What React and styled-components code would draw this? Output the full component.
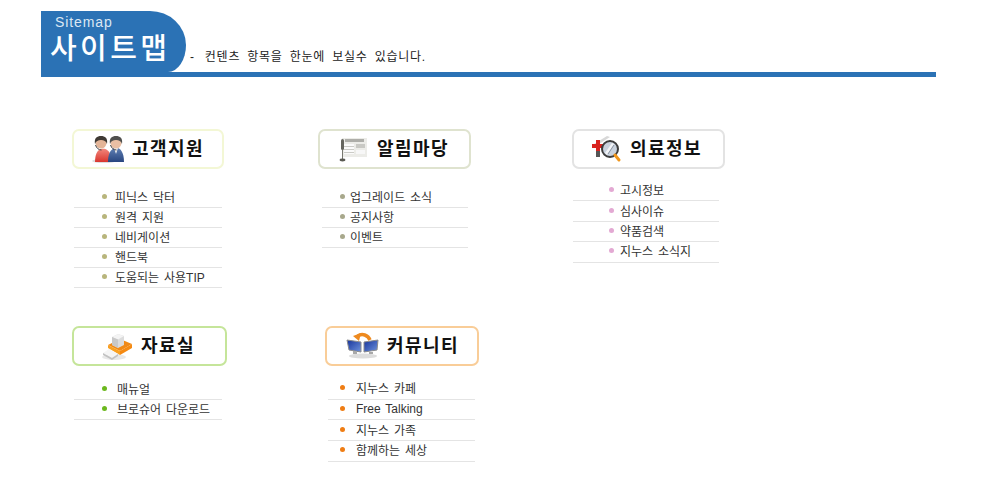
import React from 'react';
import styled, { createGlobalStyle } from 'styled-components';

const GlobalStyle = createGlobalStyle`
  body {
    margin: 0;
    background: #fff;
    font-family: "Liberation Sans", "Noto Sans CJK KR", sans-serif;
  }
`;

const Page = styled.div`
  padding-top: 11px;
`;

const Header = styled.header`
  margin-left: 41px;
  width: 895px;
  border-bottom: 5px solid #2b72b5;
`;

const HeaderTop = styled.div`
  display: flex;
  align-items: flex-end;
`;

const TitleTab = styled.div`
  width: 145px;
  height: 61px;
  box-sizing: border-box;
  padding: 4px 0 0 9px;
  background: #2b72b5;
  border-radius: 0 36px 18px 0 / 0 34px 27px 0;
  color: #fff;
`;

const TabSmall = styled.div`
  margin-left: 5px;
  font-size: 14px;
  line-height: 15px;
  letter-spacing: 0.9px;
  color: #dbe7f3;
`;

const TabBig = styled.div`
  margin-top: 1px;
  font-size: 29px;
  font-weight: 500;
  line-height: 36px;
  letter-spacing: 3.4px;
  white-space: nowrap;
`;

const Subtitle = styled.div`
  margin: 0 0 7px 4px;
  font-size: 12px;
  line-height: 16px;
  color: #222;
  word-spacing: 3px;
  letter-spacing: 0.75px;
  white-space: nowrap;
`;

const Dash = styled.span`
  margin-right: 3px;
`;

const Row = styled.div`
  display: flex;
  margin: ${(p) => p.$top}px 0 0 72px;
`;

const Section = styled.section`
  width: ${(p) => p.$width}px;
  flex: none;
`;

const Card = styled.div`
  display: flex;
  align-items: center;
  width: ${(p) => p.$width}px;
  height: 40px;
  box-sizing: border-box;
  padding-left: ${(p) => p.$pad}px;
  gap: ${(p) => p.$gap}px;
  border: 2px solid ${(p) => p.$color};
  border-radius: 7px;
  background: #fff;
`;

const CardIcon = styled.svg`
  display: block;
  flex: none;
  width: 36px;
  height: 32px;
  margin-left: -2px;
`;

const CardTitle = styled.h2`
  margin: 0;
  font-size: 18px;
  font-weight: 700;
  line-height: 24px;
  letter-spacing: 1.4px;
  color: #111;
  white-space: nowrap;
`;

const List = styled.ul`
  list-style: none;
  width: ${(p) => p.$width}px;
  margin: ${(p) => p.$top}px 0 0 ${(p) => p.$left}px;
  padding: 0;
`;

const Item = styled.li`
  display: flex;
  align-items: center;
  height: ${(p) => p.$height}px;
  box-sizing: border-box;
  padding-left: ${(p) => p.$pad}px;
  padding-bottom: 2px;
  border-bottom: 1px solid #e4e4e4;
  font-size: 12px;
  color: #333;
  word-spacing: 1.5px;
  white-space: nowrap;
`;

const Bullet = styled.span`
  flex: none;
  width: 5px;
  height: 5px;
  margin-right: ${(p) => p.$gap}px;
  border-radius: 50%;
  background: ${(p) => p.$color};
`;

const PeopleIcon = () => (
  <CardIcon viewBox="0 0 36 32">
    <defs>
      <linearGradient id="red" x1="0" y1="0" x2="0" y2="1">
        <stop offset="0" stopColor="#f2877c" />
        <stop offset="1" stopColor="#d9362e" />
      </linearGradient>
      <linearGradient id="navy" x1="0" y1="0" x2="0" y2="1">
        <stop offset="0" stopColor="#5f7fb4" />
        <stop offset="1" stopColor="#29467f" />
      </linearGradient>
    </defs>
    <ellipse cx="14" cy="28" rx="12" ry="2" fill="#ddd" />
    <path d="M5 29c0-7 2-12 6-13s8 1 9 5l1 8z" fill="url(#red)" />
    <path d="M18 29c0-7 2-13 7-14s9 4 9 14z" fill="url(#navy)" />
    <path d="M24 15l2 6 2-6z" fill="#f3f3f3" />
    <circle cx="11" cy="10" r="5.5" fill="#e4b598" />
    <path d="M5 11c-1-6 2-8 6-8s7 2 6 8c-1-3-3-4-6-4s-5 1-6 4z" fill="#3f3a34" />
    <path d="M5.5 12c1 3 3 5 6 5" fill="none" stroke="#444" strokeWidth="1" />
    <circle cx="26" cy="10" r="5.5" fill="#e9bfa4" />
    <path d="M20 11c-1-6 2-8 6-8s7 2 6 8c-1-3-3-4-6-4s-5 1-6 4z" fill="#50504e" />
    <path d="M20.5 12c1 3 3 5 6 5" fill="none" stroke="#444" strokeWidth="1" />
  </CardIcon>
);

const NewsIcon = () => (
  <CardIcon viewBox="0 0 36 32">
    <rect x="6" y="5" width="25" height="19" fill="#ecece8" />
    <rect x="9" y="6" width="19" height="3" fill="#aeaea9" />
    <rect x="8" y="11" width="10" height="10" fill="#fbfbfb" />
    <rect x="20" y="11" width="9" height="4" fill="#c9c9c4" />
    <rect x="20" y="17" width="9" height="4" fill="#f7f7f7" />
    <rect x="8" y="13" width="10" height="1" fill="#cbcbc6" />
    <rect x="8" y="16" width="10" height="1" fill="#cbcbc6" />
    <rect x="8" y="19" width="10" height="1" fill="#cbcbc6" />
    <rect x="5" y="6" width="3" height="11" rx="1.5" fill="#66665f" />
    <rect x="6" y="17" width="1" height="9" fill="#77776f" />
    <ellipse cx="6.500" cy="27" rx="3" ry="1.4" fill="#5a5a53" />
  </CardIcon>
);

const MedicalIcon = () => (
  <CardIcon viewBox="0 0 36 32">
    <path d="M4 11L17 3l3 1-11 7z" fill="#d8d8d8" />
    <rect x="6" y="16" width="4" height="8" fill="#555" />
    <path d="M6 7h4v4h4v4h-4v3H6v-3H2v-4h4z" fill="#d8231f" />
    <circle cx="20" cy="16" r="8" fill="#c9d2de" stroke="#3d3d3d" strokeWidth="2" />
    <path d="M15 20l7-10 2 1-7 11z" fill="#f2f4f7" />
    <path d="M18 21l6-9" stroke="#8b95a3" strokeWidth="1" />
    <path d="M25 22l4 5" stroke="#f0961c" strokeWidth="3" strokeLinecap="round" />
  </CardIcon>
);

const ArchiveIcon = () => (
  <CardIcon viewBox="0 0 36 32">
    <ellipse cx="14" cy="27" rx="12" ry="3" fill="#e8e8e8" />
    <path d="M8 15l12-6 12 5-12 7z" fill="#f08a18" />
    <path d="M12 7l6-3 6 2v9l-6 3-6-3z" fill="#dcdcdc" />
    <path d="M12 7l6 2.500 6-3.500-6-2z" fill="#f4f4f4" />
    <path d="M18 9.500V18l-6-3V7z" fill="#c8c8c8" />
    <path d="M8 15l12 6v4L8 18z" fill="#f9a020" />
    <path d="M20 21l12-7v4l-12 7z" fill="#f58a12" />
    <path d="M3 23l6-4 9 5-6 4z" fill="#f5f5f5" />
    <path d="M3 23v2l9 5 6-4v-2l-6 4z" fill="#c2c2c2" />
  </CardIcon>
);

const CommunityIcon = () => (
  <CardIcon viewBox="0 0 36 32">
    <defs>
      <linearGradient id="screen" x1="0" y1="0" x2="1" y2="1">
        <stop offset="0" stopColor="#16339a" />
        <stop offset="1" stopColor="#6f93dd" />
      </linearGradient>
    </defs>
    <ellipse cx="18" cy="26" rx="14" ry="2.5" fill="#dcdcdc" />
    <path d="M2 10l14 2v10L4 20z" fill="url(#screen)" stroke="#8c8c8c" strokeWidth="1" />
    <path d="M19 12l14-2-1 10-13 2z" fill="url(#screen)" stroke="#8c8c8c" strokeWidth="1" />
    <path d="M8 21h4v3H8zM24 22h4v2h-4z" fill="#a9a9a9" />
    <path d="M25 10c-2-5-8-7-12-4" fill="none" stroke="#ee8a1f" strokeWidth="3.500" />
    <path d="M8 6l8-3-2 8z" fill="#ee8a1f" />
  </CardIcon>
);

const sections = [
  {
    width: 246, top: 19, left: 2, listW: 148, itemPad: 28, gap: 8, rowH: 20, bullet: '#b8b57c',
    cardW: 152, pad: 18, cardGap: 6, border: '#f3f7d5', title: '고객지원', Icon: PeopleIcon,
    items: ['피닉스 닥터', '원격 지원', '네비게이션', '핸드북', '도움되는 사용TIP'],
  },
  {
    width: 254, top: 19, left: 4, listW: 146, itemPad: 18, gap: 5, rowH: 20, bullet: '#a8a88c',
    cardW: 153, pad: 18, cardGap: 5, border: '#dfe3cf', title: '알림마당', Icon: NewsIcon,
    items: ['업그레이드 소식', '공지사항', '이벤트'],
  },
  {
    width: 200, top: 12, left: 1, listW: 146, itemPad: 36, gap: 6, rowH: 20.4, bullet: '#e3a9d3',
    cardW: 153, pad: 18, cardGap: 4, border: '#e3e3e3', title: '의료정보', Icon: MedicalIcon,
    items: ['고시정보', '심사이슈', '약품검색', '지누스 소식지'],
  },
];

const lowerSections = [
  {
    width: 253, top: 14, left: 2, listW: 148, itemPad: 28, gap: 10, rowH: 20, bullet: '#6cb81e',
    cardW: 155, pad: 28, cardGap: 5, border: '#c5e59a', title: '자료실', Icon: ArchiveIcon,
    items: ['매뉴얼', '브로슈어 다운로드'],
  },
  {
    width: 200, top: 13, left: 3, listW: 147, itemPad: 12, gap: 11, rowH: 20.7, bullet: '#ef7d14',
    cardW: 154, pad: 20, cardGap: 6, border: '#f9cd98', title: '커뮤니티', Icon: CommunityIcon,
    items: ['지누스 카페', 'Free Talking', '지누스 가족', '함께하는 세상'],
  },
];

const SitemapSection = ({ data }) => {
  const { Icon } = data;
  return (
    <Section $width={data.width}>
      <Card $width={data.cardW} $pad={data.pad} $gap={data.cardGap} $color={data.border}>
        <Icon />
        <CardTitle>{data.title}</CardTitle>
      </Card>
      <List $top={data.top} $left={data.left} $width={data.listW}>
        {data.items.map((item) => (
          <Item key={item} $height={data.rowH} $pad={data.itemPad}>
            <Bullet $color={data.bullet} $gap={data.gap} />
            {item}
          </Item>
        ))}
      </List>
    </Section>
  );
};

export default function App() {
  return (
    <Page>
      <GlobalStyle />
      <Header>
        <HeaderTop>
          <TitleTab>
            <TabSmall>Sitemap</TabSmall>
            <TabBig>사이트맵</TabBig>
          </TitleTab>
          <Subtitle><Dash>-</Dash> 컨텐츠 항목을 한눈에 보실수 있습니다.</Subtitle>
        </HeaderTop>
      </Header>
      <Row $top={52}>
        {sections.map((s) => <SitemapSection key={s.title} data={s} />)}
      </Row>
      <Row $top={38}>
        {lowerSections.map((s) => <SitemapSection key={s.title} data={s} />)}
      </Row>
    </Page>
  );
}
